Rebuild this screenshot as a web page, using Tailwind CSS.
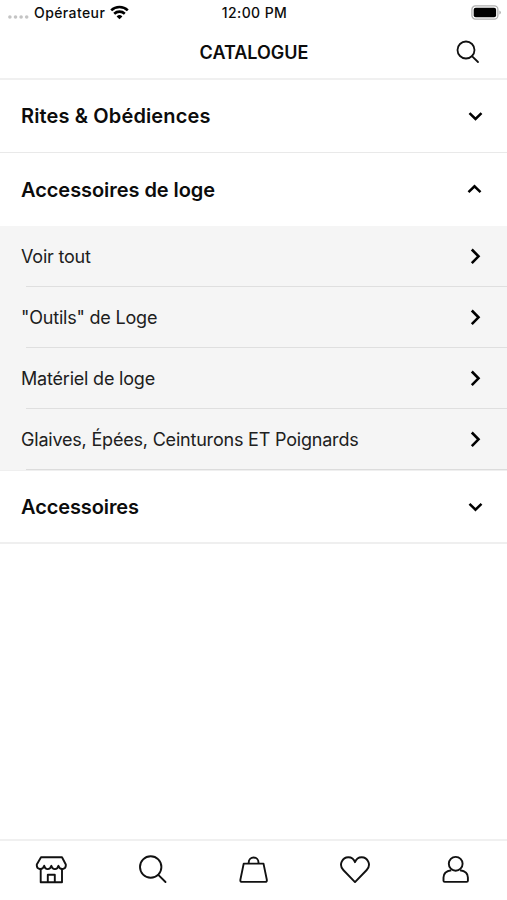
<!DOCTYPE html>
<html lang="fr">
<head>
<meta charset="utf-8">
<title>Catalogue</title>
<script src="https://cdn.jsdelivr.net/npm/@tailwindcss/browser@4"></script>
</head>
<body class="bg-white">
<div class="flex h-[900px] w-[507px] flex-col overflow-hidden bg-white font-['Inter','Liberation_Sans',sans-serif] text-[#0c0c0c]">
  <header class="flex h-20 shrink-0 flex-col border-b-2 border-[#f0f0f0]">
    <div class="grid h-[25px] grid-cols-3 items-center pl-2 pr-1.5 text-[14px] font-medium tracking-[0.4px]">
      <div class="flex items-center">
        <svg class="mt-2 h-1 w-[21px]" viewBox="0 0 21 4" fill="#c4c4c4"><circle cx="1.9" cy="2" r="1.8"/><circle cx="7.5" cy="2" r="1.8"/><circle cx="13.1" cy="2" r="1.8"/><circle cx="18.7" cy="2" r="1.8"/></svg>
        <span class="ml-[5px] whitespace-nowrap">Opérateur</span>
        <svg class="ml-[5px] h-[15px] w-[19px] shrink-0" viewBox="0 0 19 15" fill="none" stroke="#000" stroke-width="2.6"><path d="M1.2 5.4a12 12 0 0 1 16.6 0M4.2 8.7a7.8 7.8 0 0 1 10.6 0"/><path d="M9.500 14.300L6.600 11.400a4.300 4.300 0 0 1 5.800 0z" fill="#000" stroke="none"/></svg>
      </div>
      <span class="whitespace-nowrap text-center">12:00 PM</span>
      <svg class="h-[15px] w-[30px] justify-self-end" viewBox="0 0 30 15"><rect x=".9" y=".9" width="26" height="13.200" rx="3.500" fill="#fff" stroke="#b0b0b0" stroke-width="1.300"/><rect x="2.700" y="2.700" width="22.400" height="9.600" rx="2" fill="#000"/><path d="M28.500 5.500v4q1.200-.6 1.200-2t-1.200-2" fill="#999"/></svg>
    </div>
    <div class="grid grow grid-cols-[1fr_auto_1fr] items-center">
      <h1 class="col-start-2 pl-px pt-0.5 text-[18px] font-semibold">CATALOGUE</h1>
      <svg class="mr-[27px] h-6 w-6 justify-self-end" viewBox="0 0 24 24" fill="none" stroke="#111" stroke-width="1.800" stroke-linecap="round"><circle cx="10" cy="10" r="8.500"/><path d="M16.200 16.300L22 22"/></svg>
    </div>
  </header>
  <main class="grow text-[20px] font-semibold">
    <div class="flex h-[73px] items-center justify-between border-b border-[#e9e9e9] pl-[21px] pr-6">
      <span class="tracking-[0.13px]">Rites &amp; Obédiences</span>
      <svg class="h-4 w-4" viewBox="0 0 16 16" fill="none" stroke="#000" stroke-width="2.500"><path d="M2.500 5.100L8.500 11L14.500 5.100"/></svg>
    </div>
    <div class="flex h-[73px] items-center justify-between pl-[21px] pr-6">
      <span class="tracking-[-0.06px]">Accessoires de loge</span>
      <svg class="h-4 w-4" viewBox="0 0 16 16" fill="none" stroke="#000" stroke-width="2.500"><path d="M1.500 10.200L7.500 4.300L13.500 10.200"/></svg>
    </div>
    <ul class="bg-[#f5f5f5] text-[18px] font-normal tracking-[-0.2px] text-[#202020]">
      <li>
        <div class="flex h-[60px] items-center justify-between pl-[21px] pr-6"><span>Voir tout</span><svg class="h-4 w-4" viewBox="0 0 16 16" fill="none" stroke="#000" stroke-width="2.600"><path d="M4.800 1.500L11.500 8.300L4.800 15.100"/></svg></div>
        <div class="ml-[26px] h-px bg-[#dfdfdf]"></div>
      </li>
      <li>
        <div class="flex h-[60px] items-center justify-between pl-[21px] pr-6"><span>"Outils" de Loge</span><svg class="h-4 w-4" viewBox="0 0 16 16" fill="none" stroke="#000" stroke-width="2.600"><path d="M4.800 1.500L11.500 8.300L4.800 15.100"/></svg></div>
        <div class="ml-[26px] h-px bg-[#dfdfdf]"></div>
      </li>
      <li>
        <div class="flex h-[60px] items-center justify-between pl-[21px] pr-6"><span>Matériel de loge</span><svg class="h-4 w-4" viewBox="0 0 16 16" fill="none" stroke="#000" stroke-width="2.600"><path d="M4.800 1.500L11.500 8.300L4.800 15.100"/></svg></div>
        <div class="ml-[26px] h-px bg-[#dfdfdf]"></div>
      </li>
      <li>
        <div class="flex h-[60px] items-center justify-between pl-[21px] pr-6"><span>Glaives, Épées, Ceinturons ET Poignards</span><svg class="h-4 w-4" viewBox="0 0 16 16" fill="none" stroke="#000" stroke-width="2.600"><path d="M4.800 1.500L11.500 8.300L4.800 15.100"/></svg></div>
        <div class="ml-[26px] h-px bg-[#dcdcdc]"></div>
      </li>
    </ul>
    <div class="flex h-[74px] items-center justify-between border-b-2 border-t border-b-[#efefef] border-t-[#efefef] pl-[21px] pr-6">
      <span class="tracking-[-0.1px]">Accessoires</span>
      <svg class="h-4 w-4" viewBox="0 0 16 16" fill="none" stroke="#000" stroke-width="2.500"><path d="M2.500 4.800L8.500 10.700L14.500 4.800"/></svg>
    </div>
  </main>
  <nav class="grid h-[61px] shrink-0 grid-cols-5 justify-items-center border-t-2 border-[#f0f0f0] pt-[13px]">
    <svg class="h-8 w-8" viewBox="0 0 32 32" fill="none" stroke="#111" stroke-width="1.900" stroke-linejoin="round" stroke-linecap="round"><path d="M6 3.300H27L30.800 10.500C31.300 16 25 16.500 23.400 11.800C22.500 16.200 17.400 16.200 16.300 11.800C15.200 16.200 10.100 16.200 9.200 11.800C7.600 16.500 1.300 16 1.800 10.500Z"/><path d="M5.700 15V28.200H27V15M12.800 28V20.700H19.800V28"/></svg>
    <svg class="h-8 w-8" viewBox="0 0 32 32" fill="none" stroke="#111" stroke-width="1.900" stroke-linecap="round"><circle cx="14.700" cy="13" r="10.700"/><path d="M22.300 20.800L29.500 28"/></svg>
    <svg class="h-8 w-8" viewBox="-.5 0 32 32" fill="none" stroke="#111" stroke-width="1.900" stroke-linejoin="round"><path d="M6.200 9.600H26L29.300 25.600Q29.700 27.900 27.600 27.900H4.600Q2.500 27.900 2.900 25.600Z"/><path d="M11.200 9.600V8.400A4.900 4.900 0 0 1 21 8.400V9.600"/></svg>
    <svg class="h-8 w-8" viewBox="0 0 32 32" fill="none" stroke="#111" stroke-width="1.900" stroke-linejoin="round"><path d="M16 28.100L4.300 16C-.8 10.500 3.600 3.200 9.300 3.200C12.300 3.200 14.900 5 16 8.200C17.100 5 19.700 3.200 22.700 3.200C28.400 3.200 32.800 10.500 27.700 16Z"/></svg>
    <svg class="h-8 w-8" viewBox=".3 0 32 32" fill="none" stroke="#111" stroke-width="1.900" stroke-linejoin="round"><circle cx="16" cy="9.800" r="6.900"/><path d="M11.600 16.300C7 17 3.800 19.500 3.800 23.500V26.700Q3.800 27.900 5 27.900H27Q28.200 27.900 28.200 26.700V23.500C28.200 19.500 25 17 20.400 16.300"/></svg>
  </nav>
</div>
</body>
</html>
